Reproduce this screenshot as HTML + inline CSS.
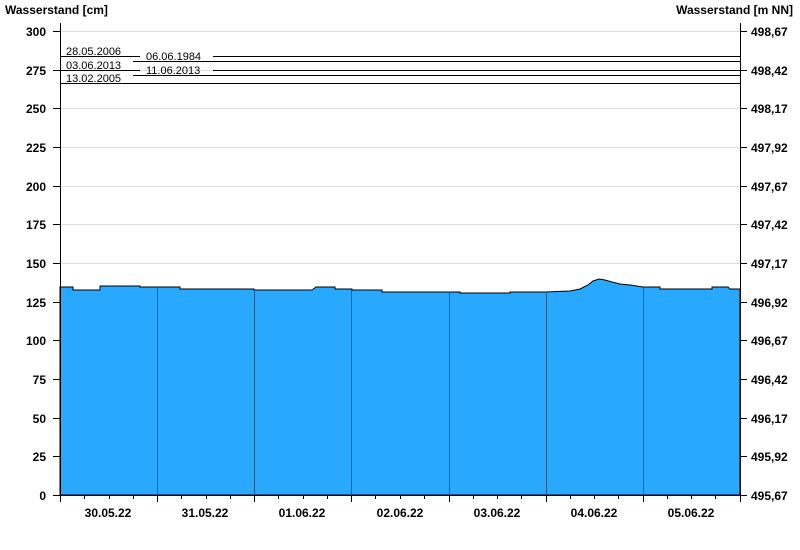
<!DOCTYPE html><html><head><style>body{margin:0;background:#fff}svg{display:block}text{font-family:"Liberation Sans",Arial,sans-serif}</style></head><body>
<svg width="800" height="550" xmlns="http://www.w3.org/2000/svg">
<g stroke="#ddd" stroke-width="1">
<line x1="60" y1="31.5" x2="740" y2="31.5"/><line x1="60" y1="70.5" x2="740" y2="70.5"/><line x1="60" y1="108.5" x2="740" y2="108.5"/><line x1="60" y1="147.5" x2="740" y2="147.5"/><line x1="60" y1="186.5" x2="740" y2="186.5"/><line x1="60" y1="224.5" x2="740" y2="224.5"/><line x1="60" y1="263.5" x2="740" y2="263.5"/>
</g>
<path d="M60,287 L73,287 L73,290 L100,290 L100,286 L140,286 L140,287 L180,287 L180,289 L254,289 L254,290 L312,290 L316,287 L335,287 L335,289 L352,289 L352,290 L382,290 L382,292 L460,292 L460,293 L510,293 L510,292 L545,292 L570,291 L580,289 L588,285 L593,281 L599,279 L605,280 L612,282 L620,284 L630,285 L643,287 L660,287 L660,289 L712,289 L712,287 L728,287 L730,289 L740,289 L740,495 L60,495 Z" fill="#29a8ff" stroke="#000" stroke-width="1"/>
<g stroke="#1a5f8f" stroke-width="1"><line x1="157.5" y1="288" x2="157.5" y2="495"/><line x1="254.5" y1="290" x2="254.5" y2="495"/><line x1="351.5" y1="290" x2="351.5" y2="495"/><line x1="449.5" y1="293" x2="449.5" y2="495"/><line x1="546.5" y1="292" x2="546.5" y2="495"/><line x1="643.5" y1="288" x2="643.5" y2="495"/></g>
<g stroke="#000" stroke-width="1">
<line x1="60.5" y1="23" x2="60.5" y2="501"/><line x1="740.5" y1="23" x2="740.5" y2="501"/><line x1="60" y1="495.5" x2="740" y2="495.5"/>
<line x1="60" y1="56.5" x2="140" y2="56.5"/><line x1="213" y1="56.5" x2="740" y2="56.5"/>
<line x1="133" y1="61.5" x2="740" y2="61.5"/>
<line x1="60" y1="70.5" x2="140" y2="70.5"/><line x1="213" y1="70.5" x2="740" y2="70.5"/>
<line x1="133" y1="75.5" x2="740" y2="75.5"/>
<line x1="60" y1="83.5" x2="740" y2="83.5"/>
</g>
<g stroke="#000" id="ticks">
<path d="M53,31.5H60M53,70.5H60M53,108.5H60M53,147.5H60M53,186.5H60M53,224.5H60M53,263.5H60M53,302.5H60M53,340.5H60M53,379.5H60M53,418.5H60M53,456.5H60M53,495.5H60"/>
<path d="M740,31.5H747M740,70.5H747M740,108.5H747M740,147.5H747M740,186.5H747M740,224.5H747M740,263.5H747M740,302.5H747M740,340.5H747M740,379.5H747M740,418.5H747M740,456.5H747M740,495.5H747"/>
<path d="M60.5,495V502M157.5,495V502M254.5,495V502M351.5,495V502M449.5,495V502M546.5,495V502M643.5,495V502M740.5,495V502"/>
<path d="M84.5,495V499M109.5,495V499M133.5,495V499M181.5,495V499M206.5,495V499M230.5,495V499M278.5,495V499M303.5,495V499M327.5,495V499M375.5,495V499M400.5,495V499M424.5,495V499M473.5,495V499M497.5,495V499M521.5,495V499M570.5,495V499M594.5,495V499M618.5,495V499M667.5,495V499M691.5,495V499M715.5,495V499"/>
</g>
<g font-size="12" font-weight="bold" fill="#000">
<text x="5" y="14">Wasserstand [cm]</text>
<text x="793" y="14" text-anchor="end">Wasserstand [m NN]</text>
<g text-anchor="end"><text x="46" y="36">300</text><text x="46" y="75">275</text><text x="46" y="113">250</text><text x="46" y="152">225</text><text x="46" y="191">200</text><text x="46" y="229">175</text><text x="46" y="268">150</text><text x="46" y="307">125</text><text x="46" y="345">100</text><text x="46" y="384">75</text><text x="46" y="423">50</text><text x="46" y="461">25</text><text x="46" y="500">0</text></g>
<g><text x="751" y="36">498,67</text><text x="751" y="75">498,42</text><text x="751" y="113">498,17</text><text x="751" y="152">497,92</text><text x="751" y="191">497,67</text><text x="751" y="229">497,42</text><text x="751" y="268">497,17</text><text x="751" y="307">496,92</text><text x="751" y="345">496,67</text><text x="751" y="384">496,42</text><text x="751" y="423">496,17</text><text x="751" y="461">495,92</text><text x="751" y="500">495,67</text></g>
<g text-anchor="middle"><text x="108" y="517">30.05.22</text><text x="205" y="517">31.05.22</text><text x="302" y="517">01.06.22</text><text x="400" y="517">02.06.22</text><text x="497" y="517">03.06.22</text><text x="594" y="517">04.06.22</text><text x="691" y="517">05.06.22</text></g>
</g>
<g font-size="11" fill="#000">
<text x="66" y="55">28.05.2006</text><text x="146" y="60">06.06.1984</text>
<text x="66" y="69">03.06.2013</text><text x="146" y="74">11.06.2013</text>
<text x="66" y="82">13.02.2005</text>
</g>
</svg></body></html>
